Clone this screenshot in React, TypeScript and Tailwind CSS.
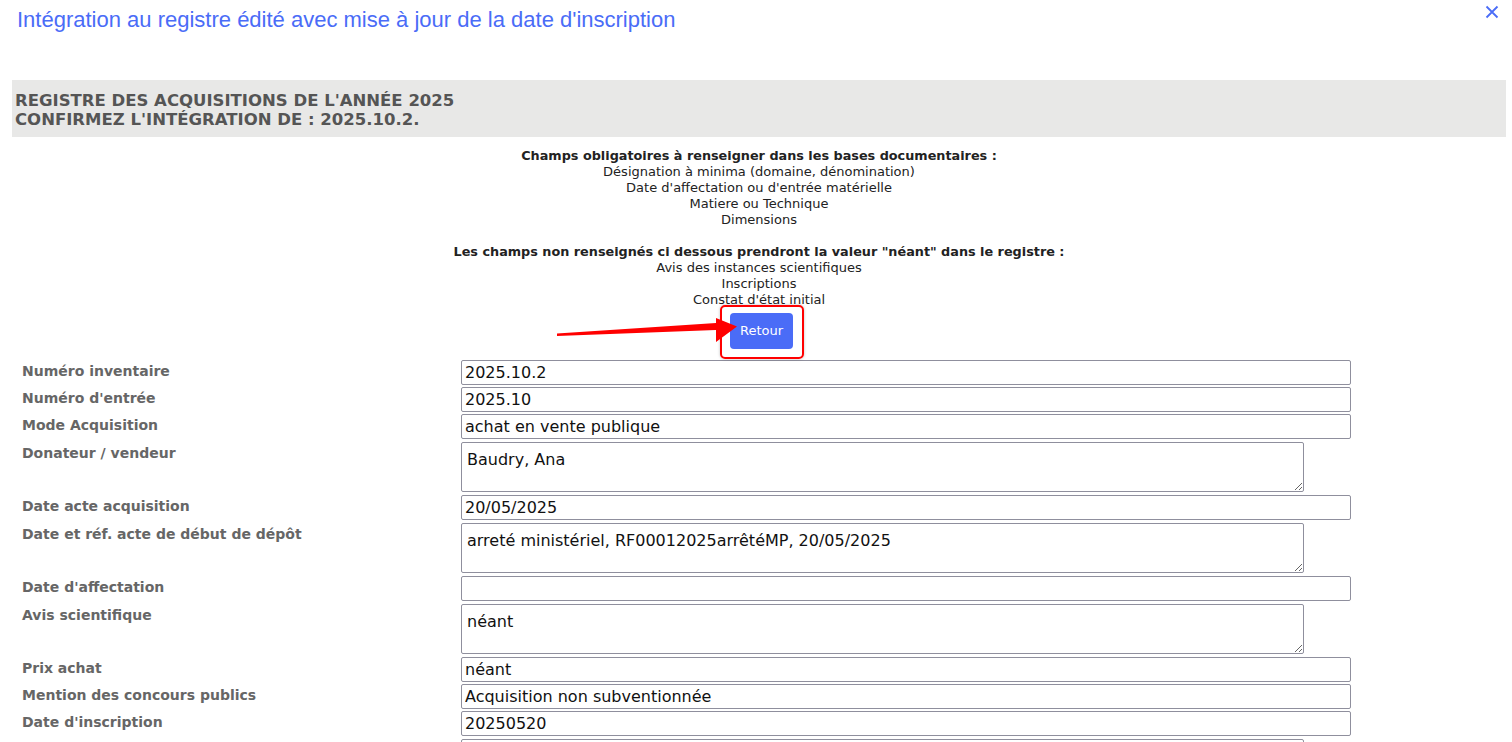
import React from 'react';

type Field = {
  label: string;
  value: string;
  multiline?: boolean;
};

const fields: Field[] = [
  { label: 'Numéro inventaire', value: '2025.10.2' },
  { label: "Numéro d'entrée", value: '2025.10' },
  { label: 'Mode Acquisition', value: 'achat en vente publique' },
  { label: 'Donateur / vendeur', value: 'Baudry, Ana', multiline: true },
  { label: 'Date acte acquisition', value: '20/05/2025' },
  {
    label: 'Date et réf. acte de début de dépôt',
    value: 'arreté ministériel, RF00012025arrêtéMP, 20/05/2025',
    multiline: true,
  },
  { label: "Date d'affectation", value: '' },
  { label: 'Avis scientifique', value: 'néant', multiline: true },
  { label: 'Prix achat', value: 'néant' },
  { label: 'Mention des concours publics', value: 'Acquisition non subventionnée' },
  { label: "Date d'inscription", value: '20250520' },
  // next row is cut by the bottom edge, only its box shows
  { label: '', value: '', multiline: true },
];

const dejavu = "font-['DejaVu_Sans',Verdana,sans-serif]";

const FieldRow: React.FC<{ field: Field }> = ({ field }) => (
  <div className={`flex ${field.multiline ? 'py-px mb-[2px]' : 'mb-[2px]'}`}>
    <div className="w-[439px] shrink-0 pt-[3px] text-[14px] leading-4 font-bold text-[#666]">
      {field.label}
    </div>
    {field.multiline ? (
      <textarea
        readOnly
        defaultValue={field.value}
        className="w-[843px] h-[50px] border border-[#8f8f9d] rounded-[2px] px-[5px] pt-[7px] text-[16px] leading-5 text-[#111]"
      />
    ) : (
      <input
        readOnly
        defaultValue={field.value}
        className="w-[890px] h-[25px] border border-[#8f8f9d] rounded-[2px] px-[3px] text-[16px] text-[#111]"
      />
    )}
  </div>
);

export default function App() {
  return (
    <div className={`relative bg-white min-h-[742px] overflow-hidden ${dejavu}`}>
      {/* header */}
      <div className="flex items-start justify-between pl-[17px] pr-[12px] pt-[8px] h-[80px]">
        <h1 className="font-['Liberation_Sans',Arial,sans-serif] text-[22px] leading-6 text-[#4a6cf7]">
          Intégration au registre édité avec mise à jour de la date d'inscription
        </h1>
        <button className="text-[#4a6cf7] -mt-[4px]" aria-label="Fermer">
          <svg width="16" height="16" viewBox="0 0 16 16" fill="none">
            <path d="M2.5 2.5L13.5 13.5M13.5 2.5L2.5 13.5" stroke="currentColor" strokeWidth="1.8" />
          </svg>
        </button>
      </div>

      <div className="ml-[12px] mr-[6px]">
        <div className="bg-[#e8e8e7] h-[57px] px-[3px] pt-[11px] text-[16.5px] leading-[19px] font-bold text-[#555]">
          <div>REGISTRE DES ACQUISITIONS DE L'ANNÉE 2025</div>
          <div>CONFIRMEZ L'INTÉGRATION DE : 2025.10.2.</div>
        </div>

        <div className="pt-[11px] text-center text-[13px] leading-4 text-[#222]">
          <div className="font-bold text-[12.8px]">
            Champs obligatoires à renseigner dans les bases documentaires :
          </div>
          <div>Désignation à minima (domaine, dénomination)</div>
          <div>Date d'affectation ou d'entrée matérielle</div>
          <div>Matiere ou Technique</div>
          <div>Dimensions</div>
          <div className="h-4" />
          <div className="font-bold text-[12.8px]">
            Les champs non renseignés ci dessous prendront la valeur "néant" dans le registre :
          </div>
          <div>Avis des instances scientifiques</div>
          <div>Inscriptions</div>
          <div>Constat d'état initial</div>
          <div className="flex justify-center pt-[5px] pb-[11px]">
            <button className="relative ml-[5px] w-[63px] h-[36px] rounded-[4px] bg-[#4a6cf7] text-white text-[13px]">
              Retour
              <span className="absolute -left-[10px] -top-[8px] w-[84px] h-[54px] rounded-[5px] border-2 border-[#f00] shadow-[0_0_3px_rgba(0,0,0,0.25)]" />
            </button>
          </div>
        </div>

        <div className="pl-[10px]">
          {fields.map((f, i) => (
            <FieldRow key={i} field={f} />
          ))}
        </div>
      </div>

      {/* annotation arrow */}
      <svg
        className="absolute left-0 top-0 pointer-events-none"
        width="1512"
        height="742"
        viewBox="0 0 1512 742"
      >
        <polygon
          points="557,333.5 716,323 716,318 737,326.5 716,342 716,330 557,336"
          fill="#f00"
        />
      </svg>
    </div>
  );
}
